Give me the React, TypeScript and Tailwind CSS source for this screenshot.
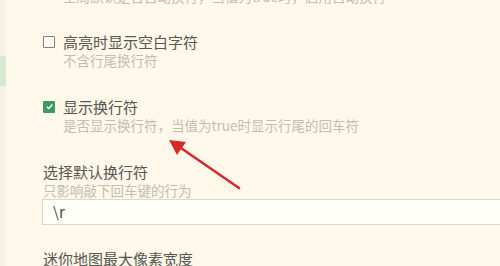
import React from "react";

const font = { fontFamily: '"Noto Sans CJK SC", "Microsoft YaHei", sans-serif' };

function Check({ checked }: { checked?: boolean }) {
  if (checked) {
    return (
      <span className="flex h-[12px] w-[12px] shrink-0 items-center justify-center rounded-[1px] bg-[#3f9a62]">
        <svg width="9" height="9" viewBox="0 0 10 10">
          <path d="M2 5.2 L4.2 7.3 L8.2 2.8" fill="none" stroke="#fff" strokeWidth="1.6" />
        </svg>
      </span>
    );
  }
  return <span className="h-[12px] w-[12px] shrink-0 rounded-[1px] border border-[#7f7f78] bg-[#fffdf6]" />;
}

export default function App() {
  return (
    <div className="relative flex h-[266px] w-[500px] overflow-hidden bg-[#fdf8e9]" style={font}>
      <aside className="flex w-[6px] shrink-0 flex-col bg-[#f7f2e3] pt-[56px]">
        <div className="h-[30px] w-full bg-[#d8e8d1]" />
      </aside>
      <main className="flex min-w-0 flex-1 flex-col pl-[37px]">
        <div className="-mt-[13px] h-[18px] whitespace-nowrap pl-[20px] text-[13.5px] leading-[18px] text-[#c2bdb1]">
          全局默认是否自动换行，当值为true时，启用自动换行
        </div>

        <div className="mt-[27px] flex items-center gap-[8px]">
          <Check />
          <span className="text-[15px] leading-[19px] text-[#57564f]">高亮时显示空白字符</span>
        </div>
        <div className="mt-[1px] h-[16px] pl-[20px] text-[13.5px] leading-[16px] text-[#c2bdb1]">不含行尾换行符</div>

        <div className="mt-[29px] flex items-center gap-[8px]">
          <Check checked />
          <span className="text-[15px] leading-[19px] text-[#57564f]">显示换行符</span>
        </div>
        <div className="mt-[1px] h-[16px] whitespace-nowrap pl-[20px] text-[13.5px] leading-[16px] text-[#c2bdb1]">
          是否显示换行符，当值为true时显示行尾的回车符
        </div>

        <div className="mt-[29px] text-[15px] leading-[19px] text-[#57564f]">选择默认换行符</div>
        <div className="mt-[1px] h-[16px] whitespace-nowrap text-[13.5px] leading-[16px] text-[#c2bdb1]">只影响敲下回车键的行为</div>
        <div className="-ml-[1px] mt-[1px] flex h-[26px] w-[480px] shrink-0 items-center border border-[#dcd7c9] bg-[#fffdf7] pl-[10px] text-[15px] text-[#4d4c48]">
          \r
        </div>

        <div className="mt-[24px] whitespace-nowrap text-[15px] leading-[20px] text-[#57564f]">迷你地图最大像素宽度</div>
      </main>

      <svg className="pointer-events-none absolute left-0 top-0" width="500" height="266">
        <line x1="239" y1="188" x2="178" y2="146" stroke="#d42a2a" strokeWidth="2.6" strokeLinecap="round" />
        <polygon points="169,140 186,142 177,155" fill="#d42a2a" />
      </svg>
    </div>
  );
}
